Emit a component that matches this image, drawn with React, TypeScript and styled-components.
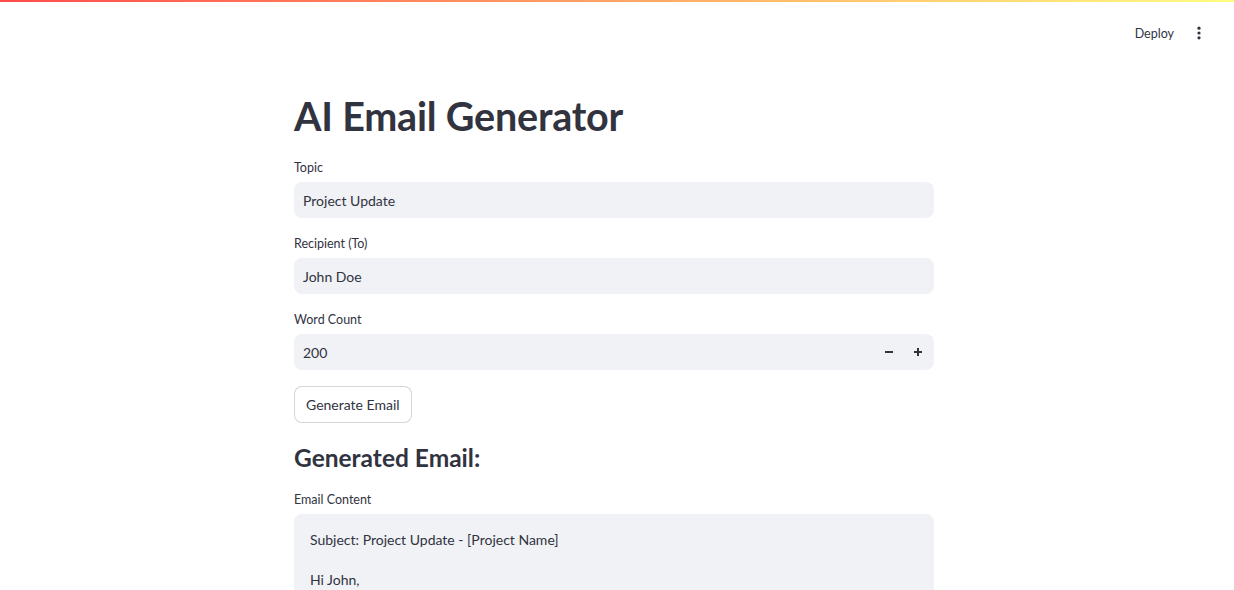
import React from "react";
import styled, { createGlobalStyle } from "styled-components";

const Global = createGlobalStyle`
  html, body { margin: 0; padding: 0; background: #ffffff; overflow: hidden; }
  body { font-family: Lato, "Noto Sans", sans-serif; color: #31333f; }
  * { box-sizing: border-box; }
`;

const Page = styled.div`
  width: 1234px;
  height: 590px;
  overflow: hidden;
  display: flex;
  flex-direction: column;
  & > * { flex-shrink: 0; }
`;

const Decoration = styled.div`
  height: 2px;
  background: linear-gradient(90deg, #ff4b4b, #fffd80);
`;

const Header = styled.header`
  height: 60px;
  display: flex;
  align-items: center;
  justify-content: flex-end;
  gap: 17px;
  padding: 0 27px 0 0;
`;

const HeaderLink = styled.span`
  font-size: 12.5px;
  color: #31333f;
  margin-top: 2px;
`;

const Dots = styled.svg`
  width: 16px;
  height: 16px;
  display: block;
  margin-top: 2px;
`;

const Main = styled.main`
  display: flex;
  justify-content: center;
  padding-right: 6px;
`;

const Column = styled.div`
  width: 640px;
  display: flex;
  flex-direction: column;
`;

const Title = styled.h1`
  margin: 26px 0 14px;
  font-size: 39.5px;
  font-weight: 700;
  line-height: 56px;
  letter-spacing: -0.2px;
  color: #31333f;
`;

const Field = styled.div<{ $top: number }>`
  display: flex;
  flex-direction: column;
  margin-top: ${(p) => p.$top}px;
`;

const Label = styled.label`
  font-size: 12.5px;
  line-height: 20px;
  color: #31333f;
  margin-bottom: 4px;
`;

const InputBox = styled.div`
  height: 36px;
  background: #f0f2f6;
  border-radius: 8px;
  display: flex;
  align-items: center;
  padding: 0 2px 0 9px;
  font-size: 14px;
  color: #31333f;
`;

const Value = styled.span`
  flex: 1;
`;

const Stepper = styled.span`
  width: 29px;
  height: 36px;
  display: flex;
  align-items: center;
  justify-content: center;
`;

const StepIcon = styled.svg`
  width: 10px;
  height: 10px;
  display: block;
`;

const Button = styled.button`
  margin-top: 16px;
  align-self: flex-start;
  height: 37px;
  padding: 0 11px;
  border: 1px solid rgba(49, 51, 63, 0.2);
  border-radius: 8px;
  background: #ffffff;
  font-family: inherit;
  font-size: 14px;
  color: #31333f;
`;

const Subheading = styled.h3`
  margin: 18px 0 0;
  font-size: 24.5px;
  font-weight: 700;
  line-height: 34px;
  color: #31333f;
`;

const TextArea = styled.div`
  height: 200px;
  background: #f0f2f6;
  border-radius: 8px;
  padding: 16px 16px;
  font-size: 14px;
  line-height: 20px;
  color: #31333f;
  white-space: pre-wrap;
`;

export default function App() {
  return (
    <Page>
      <Global />
      <Decoration />
      <Header>
        <HeaderLink>Deploy</HeaderLink>
        <Dots viewBox="0 0 16 16">
          <circle cx="8" cy="3.2" r="1.6" fill="#31333f" />
          <circle cx="8" cy="8" r="1.6" fill="#31333f" />
          <circle cx="8" cy="12.8" r="1.6" fill="#31333f" />
        </Dots>
      </Header>
      <Main>
        <Column>
          <Title>AI Email Generator</Title>
          <Field $top={0}>
            <Label>Topic</Label>
            <InputBox><Value>Project Update</Value></InputBox>
          </Field>
          <Field $top={16}>
            <Label>Recipient (To)</Label>
            <InputBox><Value>John Doe</Value></InputBox>
          </Field>
          <Field $top={16}>
            <Label>Word Count</Label>
            <InputBox>
              <Value>200</Value>
              <Stepper>
                <StepIcon viewBox="0 0 10 10">
                  <rect x="1" y="4" width="8" height="2" fill="#31333f" />
                </StepIcon>
              </Stepper>
              <Stepper>
                <StepIcon viewBox="0 0 10 10">
                  <rect x="1" y="4" width="8" height="2" fill="#31333f" />
                  <rect x="4" y="1" width="2" height="8" fill="#31333f" />
                </StepIcon>
              </Stepper>
            </InputBox>
          </Field>
          <Button>Generate Email</Button>
          <Subheading>Generated Email:</Subheading>
          <Field $top={15}>
            <Label>Email Content</Label>
            <TextArea>{"Subject: Project Update - [Project Name]\n\nHi John,"}</TextArea>
          </Field>
        </Column>
      </Main>
    </Page>
  );
}
